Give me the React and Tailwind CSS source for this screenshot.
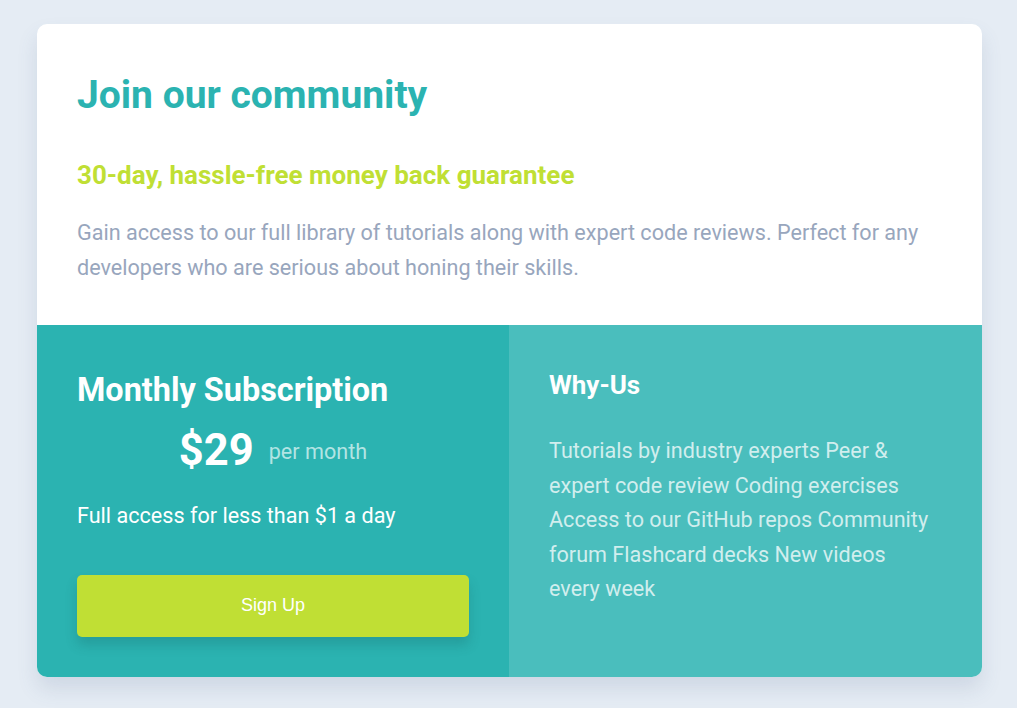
import React from "react";

export default function App() {
  return (
    <div
      className="min-h-screen bg-[#e5ecf4] px-[37px] pt-[24px] pb-[31px]"
      style={{ fontFamily: "Roboto, 'Liberation Sans', sans-serif" }}
    >
      <div className="w-[945px] rounded-[10px] overflow-hidden bg-white shadow-[0_12px_20px_rgba(80,100,140,0.15)]">
        {/* intro */}
        <div className="px-10 pt-[47px] pb-[40px]">
          <h1 className="text-[39px] leading-[48px] font-bold text-[#2bb3b1]">Join our community</h1>
          <h2 className="mt-[41px] text-[26px] leading-[30px] font-bold text-[#c0df34]">
            30-day, hassle-free money back guarantee
          </h2>
          <p className="mt-[25px] text-[21.6px] leading-[35px] text-[#98a6bd]">
            Gain access to our full library of tutorials along with expert code reviews. Perfect for any
            developers who are serious about honing their skills.
          </p>
        </div>

        <div className="grid grid-cols-[472px_1fr]">
          {/* monthly */}
          <div className="bg-[#2bb3b1] px-10 pt-[45px] pb-[40px]">
            <h2 className="text-[32.4px] leading-[40px] font-bold text-white">Monthly Subscription</h2>
            <div className="mt-[15px] flex items-center justify-center gap-[15px]">
              <span className="text-[43.5px] leading-[52px] font-bold text-white">$29</span>
              <span className="text-[21.6px] text-[#b2e4e3] mt-[2px]">per month</span>
            </div>
            <p className="mt-[23px] text-[21.6px] leading-[32px] text-white">Full access for less than $1 a day</p>
            <button className="mt-[43px] w-full h-[62px] pb-[2px] rounded-[5px] bg-[#c0df34] text-white text-[18px] font-['Liberation_Sans',Arial,sans-serif] shadow-[0_8px_12px_rgba(20,80,80,0.22)]">
              Sign Up
            </button>
          </div>

          {/* why */}
          <div className="bg-[#4abebd] pl-10 pr-[45px] pt-[45px] pb-[40px]">
            <h3 className="text-[26px] leading-[30px] font-bold text-white">Why-Us</h3>
            <p className="mt-[34px] text-[21.6px] leading-[34.5px] text-white/75">
              Tutorials by industry experts Peer &amp; expert code review Coding exercises Access to our GitHub
              repos Community forum Flashcard decks New videos every week
            </p>
          </div>
        </div>
      </div>
    </div>
  );
}
